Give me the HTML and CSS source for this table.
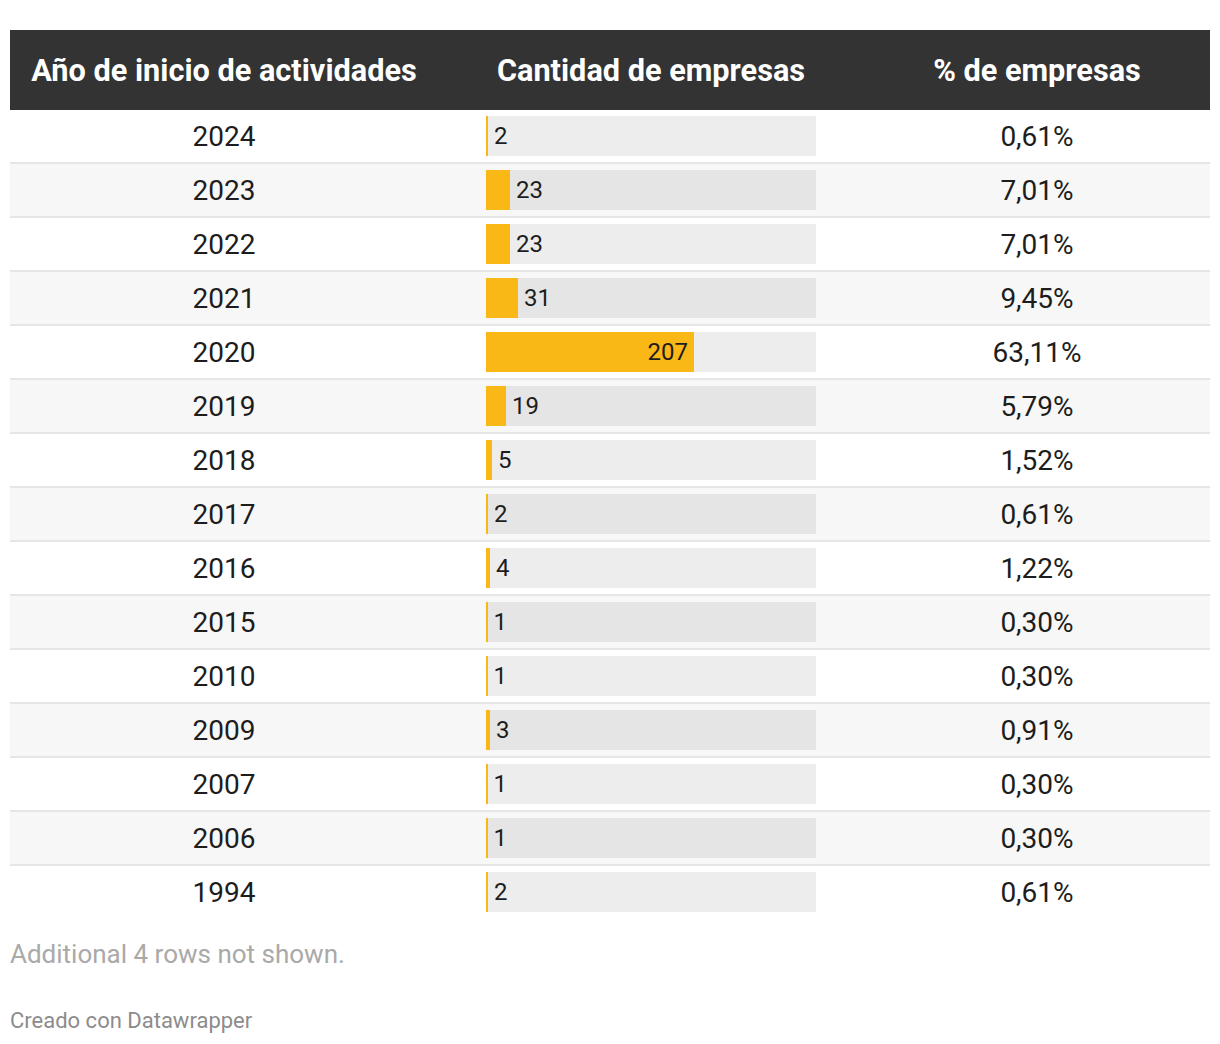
FILE: index.html
```html
<!DOCTYPE html>
<html lang="es">
<head>
<meta charset="utf-8">
<title>Año de inicio de actividades</title>
<link rel="stylesheet" href="styles.css">
</head>
<body>
<div class="chart">
  <div class="table">
    <div class="row head">
      <div class="cell">Año de inicio de actividades</div>
      <div class="cell">Cantidad de empresas</div>
      <div class="cell">% de empresas</div>
    </div>
    <div class="row"><div class="cell">2024</div><div class="cell barcell"><div class="track"><div class="fill" style="width:2px"></div><span class="val">2</span></div></div><div class="cell">0,61%</div></div>
    <div class="row"><div class="cell">2023</div><div class="cell barcell"><div class="track"><div class="fill" style="width:24px"></div><span class="val">23</span></div></div><div class="cell">7,01%</div></div>
    <div class="row"><div class="cell">2022</div><div class="cell barcell"><div class="track"><div class="fill" style="width:24px"></div><span class="val">23</span></div></div><div class="cell">7,01%</div></div>
    <div class="row"><div class="cell">2021</div><div class="cell barcell"><div class="track"><div class="fill" style="width:32px"></div><span class="val">31</span></div></div><div class="cell">9,45%</div></div>
    <div class="row"><div class="cell">2020</div><div class="cell barcell"><div class="track"><div class="fill inside" style="width:208px"><span class="val">207</span></div></div></div><div class="cell">63,11%</div></div>
    <div class="row"><div class="cell">2019</div><div class="cell barcell"><div class="track"><div class="fill" style="width:20px"></div><span class="val">19</span></div></div><div class="cell">5,79%</div></div>
    <div class="row"><div class="cell">2018</div><div class="cell barcell"><div class="track"><div class="fill" style="width:6px"></div><span class="val">5</span></div></div><div class="cell">1,52%</div></div>
    <div class="row"><div class="cell">2017</div><div class="cell barcell"><div class="track"><div class="fill" style="width:2px"></div><span class="val">2</span></div></div><div class="cell">0,61%</div></div>
    <div class="row"><div class="cell">2016</div><div class="cell barcell"><div class="track"><div class="fill" style="width:4px"></div><span class="val">4</span></div></div><div class="cell">1,22%</div></div>
    <div class="row"><div class="cell">2015</div><div class="cell barcell"><div class="track"><div class="fill" style="width:1.5px"></div><span class="val">1</span></div></div><div class="cell">0,30%</div></div>
    <div class="row"><div class="cell">2010</div><div class="cell barcell"><div class="track"><div class="fill" style="width:1.5px"></div><span class="val">1</span></div></div><div class="cell">0,30%</div></div>
    <div class="row"><div class="cell">2009</div><div class="cell barcell"><div class="track"><div class="fill" style="width:4px"></div><span class="val">3</span></div></div><div class="cell">0,91%</div></div>
    <div class="row"><div class="cell">2007</div><div class="cell barcell"><div class="track"><div class="fill" style="width:1.5px"></div><span class="val">1</span></div></div><div class="cell">0,30%</div></div>
    <div class="row"><div class="cell">2006</div><div class="cell barcell"><div class="track"><div class="fill" style="width:1.5px"></div><span class="val">1</span></div></div><div class="cell">0,30%</div></div>
    <div class="row last"><div class="cell">1994</div><div class="cell barcell"><div class="track"><div class="fill" style="width:2px"></div><span class="val">2</span></div></div><div class="cell">0,61%</div></div>
  </div>
  <p class="note">Additional 4 rows not shown.</p>
  <p class="credit">Creado con Datawrapper</p>
</div>
</body>
</html>
```

FILE: styles.css
```css
html, body {
  margin: 0;
  padding: 0;
  background: #fff;
}
body {
  font-family: Roboto, "Liberation Sans", sans-serif;
  color: #1d1d1d;
}
.chart {
  padding: 30px 10px 0 10px;
}
.table {
  width: 1200px;
}
.row {
  display: grid;
  grid-template-columns: 428px 426px 346px;
  height: 52px;
  border-bottom: 2px solid #e6e6e6;
  align-items: center;
}
.row:nth-child(odd) {
  background: #f7f7f7;
}
.row.last {
  border-bottom: none;
}
.row.head {
  height: 80px;
  background: #333;
  border-bottom: none;
  color: #fff;
  font-weight: 700;
}
.cell {
  text-align: center;
  font-size: 28px;
  white-space: nowrap;
}
.head .cell {
  font-size: 30.7px;
}
.barcell {
  display: flex;
  justify-content: center;
}
.track {
  width: 330px;
  height: 40px;
  background: rgba(0, 0, 0, 0.07);
  display: flex;
  align-items: center;
}
.fill {
  height: 40px;
  background: #fab817;
  flex: none;
}
.fill.inside {
  display: flex;
  align-items: center;
  justify-content: flex-end;
}
.val {
  font-size: 24px;
  margin-left: 6px;
  color: #1d1d1d;
}
.fill.inside .val {
  margin-left: 0;
  margin-right: 6px;
}
.note {
  margin: 20px 0 0 0;
  font-size: 26px;
  color: #a9a9a9;
  line-height: 32px;
}
.credit {
  margin: 36px 0 0 0;
  font-size: 22px;
  color: #8c8c8c;
  line-height: 30px;
}
```
